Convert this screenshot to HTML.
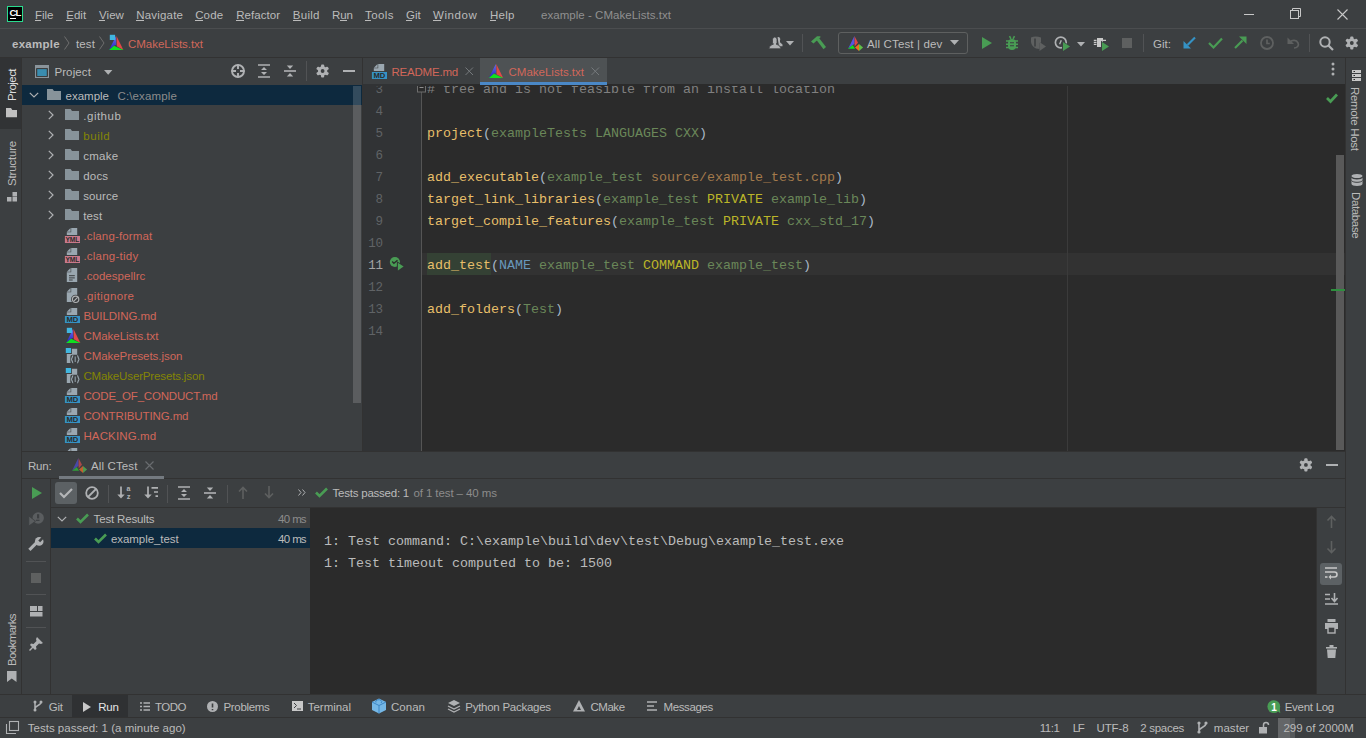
<!DOCTYPE html>
<html><head><meta charset="utf-8"><title>CLion</title>
<style>
html,body{margin:0;padding:0;}
body{width:1366px;height:738px;overflow:hidden;position:relative;background:#3C3F41;font-family:'Liberation Sans', sans-serif;}
svg{overflow:visible}
.m{-webkit-text-stroke:0.2px currentColor}
</style></head><body>
<div style="position:absolute;left:0px;top:28px;width:1366px;height:1px;background:#4B4D4F;"></div>
<div style="position:absolute;left:7px;top:6px;width:16px;height:16px;background:#000;box-sizing:border-box;border:1px solid #2ADB8F;"></div>
<div style="position:absolute;left:9.6px;top:7.96px;font-family:'Liberation Sans', sans-serif;font-size:9.5px;font-weight:700;line-height:1;white-space:pre;color:#FFFFFF;letter-spacing:-1.036px;">CL</div>
<div style="position:absolute;left:10px;top:18px;width:6px;height:1.3px;background:#FFFFFF;"></div>
<div style="position:absolute;left:35px;top:10.27px;font-family:'Liberation Sans', sans-serif;font-size:11.5px;font-weight:400;line-height:1;white-space:pre;color:#BBBBBB;letter-spacing:-0.008px;">File</div>
<div style="position:absolute;left:35px;top:20px;width:6px;height:1px;background:#BBBBBB;"></div>
<div style="position:absolute;left:66.2px;top:10.27px;font-family:'Liberation Sans', sans-serif;font-size:11.5px;font-weight:400;line-height:1;white-space:pre;color:#BBBBBB;letter-spacing:0.043px;">Edit</div>
<div style="position:absolute;left:66.2px;top:20px;width:6px;height:1px;background:#BBBBBB;"></div>
<div style="position:absolute;left:99px;top:10.27px;font-family:'Liberation Sans', sans-serif;font-size:11.5px;font-weight:400;line-height:1;white-space:pre;color:#BBBBBB;letter-spacing:0.070px;">View</div>
<div style="position:absolute;left:99px;top:20px;width:6px;height:1px;background:#BBBBBB;"></div>
<div style="position:absolute;left:136.2px;top:10.27px;font-family:'Liberation Sans', sans-serif;font-size:11.5px;font-weight:400;line-height:1;white-space:pre;color:#BBBBBB;letter-spacing:0.201px;">Navigate</div>
<div style="position:absolute;left:136.2px;top:20px;width:8px;height:1px;background:#BBBBBB;"></div>
<div style="position:absolute;left:195.2px;top:10.27px;font-family:'Liberation Sans', sans-serif;font-size:11.5px;font-weight:400;line-height:1;white-space:pre;color:#BBBBBB;letter-spacing:0.125px;">Code</div>
<div style="position:absolute;left:195.2px;top:20px;width:8px;height:1px;background:#BBBBBB;"></div>
<div style="position:absolute;left:236.2px;top:10.27px;font-family:'Liberation Sans', sans-serif;font-size:11.5px;font-weight:400;line-height:1;white-space:pre;color:#BBBBBB;letter-spacing:0.066px;">Refactor</div>
<div style="position:absolute;left:236.2px;top:20px;width:8px;height:1px;background:#BBBBBB;"></div>
<div style="position:absolute;left:292.8px;top:10.27px;font-family:'Liberation Sans', sans-serif;font-size:11.5px;font-weight:400;line-height:1;white-space:pre;color:#BBBBBB;letter-spacing:0.284px;">Build</div>
<div style="position:absolute;left:292.8px;top:20px;width:8px;height:1px;background:#BBBBBB;"></div>
<div style="position:absolute;left:332px;top:10.27px;font-family:'Liberation Sans', sans-serif;font-size:11.5px;font-weight:400;line-height:1;white-space:pre;color:#BBBBBB;letter-spacing:-0.103px;">Run</div>
<div style="position:absolute;left:340px;top:20px;width:7px;height:1px;background:#BBBBBB;"></div>
<div style="position:absolute;left:365px;top:10.27px;font-family:'Liberation Sans', sans-serif;font-size:11.5px;font-weight:400;line-height:1;white-space:pre;color:#BBBBBB;letter-spacing:0.428px;">Tools</div>
<div style="position:absolute;left:365px;top:20px;width:6px;height:1px;background:#BBBBBB;"></div>
<div style="position:absolute;left:406px;top:10.27px;font-family:'Liberation Sans', sans-serif;font-size:11.5px;font-weight:400;line-height:1;white-space:pre;color:#BBBBBB;letter-spacing:-0.001px;">Git</div>
<div style="position:absolute;left:406px;top:20px;width:6px;height:1px;background:#BBBBBB;"></div>
<div style="position:absolute;left:433px;top:10.27px;font-family:'Liberation Sans', sans-serif;font-size:11.5px;font-weight:400;line-height:1;white-space:pre;color:#BBBBBB;letter-spacing:0.566px;">Window</div>
<div style="position:absolute;left:433px;top:20px;width:8px;height:1px;background:#BBBBBB;"></div>
<div style="position:absolute;left:490px;top:10.27px;font-family:'Liberation Sans', sans-serif;font-size:11.5px;font-weight:400;line-height:1;white-space:pre;color:#BBBBBB;letter-spacing:0.236px;">Help</div>
<div style="position:absolute;left:490px;top:20px;width:6px;height:1px;background:#BBBBBB;"></div>
<div style="position:absolute;left:541px;top:10.27px;font-family:'Liberation Sans', sans-serif;font-size:11.5px;font-weight:400;line-height:1;white-space:pre;color:#909090;letter-spacing:0.037px;">example - CMakeLists.txt</div>
<div style="position:absolute;left:1244px;top:14px;width:10px;height:1px;background:#C8C8C8;"></div>
<svg style="position:absolute;left:1290px;top:8px;" width="12" height="12" viewBox="0 0 12 12"><rect x="0.5" y="2.5" width="8" height="8" fill="none" stroke="#C8C8C8" stroke-width="1"/><path d="M2.5 2.5V0.5H10.5V8.5H8.5" fill="none" stroke="#C8C8C8" stroke-width="1"/></svg>
<svg style="position:absolute;left:1337px;top:9px;" width="11" height="11" viewBox="0 0 11 11"><path d="M0.5 0.5L10.5 10.5M10.5 0.5L0.5 10.5" stroke="#C8C8C8" stroke-width="1.1"/></svg>
<div style="position:absolute;left:0px;top:57px;width:1366px;height:1px;background:#323232;"></div>
<div style="position:absolute;left:12px;top:39.27px;font-family:'Liberation Sans', sans-serif;font-size:11.5px;font-weight:700;line-height:1;white-space:pre;color:#BBBBBB;letter-spacing:0.281px;">example</div>
<svg style="position:absolute;left:64px;top:36px;" width="6" height="14" viewBox="0 0 6 14"><path d="M0.5 0.5L5 7L0.5 13.5" fill="none" stroke="#6E6E6E" stroke-width="1"/></svg>
<div style="position:absolute;left:76px;top:39.27px;font-family:'Liberation Sans', sans-serif;font-size:11.5px;font-weight:400;line-height:1;white-space:pre;color:#BBBBBB;letter-spacing:0.113px;">test</div>
<svg style="position:absolute;left:99px;top:36px;" width="6" height="14" viewBox="0 0 6 14"><path d="M0.5 0.5L5 7L0.5 13.5" fill="none" stroke="#6E6E6E" stroke-width="1"/></svg>
<svg style="position:absolute;left:108px;top:34px;" width="16" height="16" viewBox="0 0 16 16"><defs><linearGradient id="cmb" x1="0" y1="0" x2="0" y2="1"><stop offset="0" stop-color="#7070E8"/><stop offset="1" stop-color="#2020C0"/></linearGradient></defs><g transform="translate(0.2,1)"><path d="M7.8 0.9L0.8 14.9L5.8 10.7L8.1 9.8Z" fill="url(#cmb)"/><path d="M8.3 0.9L15.2 14.9L8.6 11.2Z" fill="#E04848"/><path d="M0.8 14.9L5.8 10.7L15.2 14.9Z" fill="#10E020"/></g><rect x="1.8" y="0.8" width="5.3" height="5.2" fill="#40B6E0"/></svg>
<div style="position:absolute;left:128px;top:39.27px;font-family:'Liberation Sans', sans-serif;font-size:11.5px;font-weight:400;line-height:1;white-space:pre;color:#D1675A;letter-spacing:-0.030px;">CMakeLists.txt</div>
<svg style="position:absolute;left:768px;top:36px;" width="16" height="14" viewBox="0 0 16 14"><path d="M9.5 1.2A2 2.3 0 0 1 12 4.5V6.3L14.5 8.5V10.3H11Z" fill="#AFB1B3"/><path d="M6.7 1A2.3 2.6 0 0 1 9 3.6V6.5Q9 7.5 8 8Q12.5 9 13 12.8H0.8Q1.2 9 5.5 8Q4.5 7.5 4.5 6.5V3.6A2.3 2.6 0 0 1 6.7 1Z" fill="#AFB1B3" stroke="#3C3F41" stroke-width="0.8"/></svg>
<svg style="position:absolute;left:786px;top:41px;" width="8" height="5" viewBox="0 0 8 5"><path d="M0 0H8L4 4.5Z" fill="#AFB1B3"/></svg>
<div style="position:absolute;left:802px;top:34px;width:1px;height:18px;background:#515355;"></div>
<svg style="position:absolute;left:810px;top:35px;" width="17" height="16" viewBox="0 0 17 16"><path d="M1 6.5L7 1.3H10.3L10.5 2.3L3.5 8.5Z" fill="#499C54"/><path d="M6.5 5L9 3L16 12L13.5 14.3Z" fill="#499C54"/></svg>
<div style="position:absolute;left:838px;top:32px;width:130px;height:22px;background:transparent;box-sizing:border-box;border:1px solid #5E6060;border-radius:3px;"></div>
<svg style="position:absolute;left:848px;top:36px;" width="16" height="16" viewBox="0 0 16 16"><path d="M6.4 0L0.1 12.8L4.7 9L6.6 8Z" fill="#5555E0"/><path d="M6.6 0.3L10 6.7L6.6 10.5Z" fill="#E04545"/><path d="M0.1 12.8L4.7 9L7.1 12.8Z" fill="#10E020"/><path d="M7 11.4L11 8V14.9Z" fill="#F07020"/><path d="M11 8L15.1 11.4L11 14.9Z" fill="#60C048"/></svg>
<div style="position:absolute;left:867px;top:39.27px;font-family:'Liberation Sans', sans-serif;font-size:11.5px;font-weight:400;line-height:1;white-space:pre;color:#BBBBBB;letter-spacing:0.147px;">All CTest | dev</div>
<svg style="position:absolute;left:950px;top:40px;" width="9" height="5" viewBox="0 0 9 5"><path d="M0 0H9L4.5 5Z" fill="#AFB1B3"/></svg>
<svg style="position:absolute;left:982px;top:37px;" width="10" height="12" viewBox="0 0 10 12"><path d="M0 0L10 6L0 12Z" fill="#499C54"/></svg>
<svg style="position:absolute;left:1005px;top:35px;" width="14" height="16" viewBox="0 0 14 16"><path d="M3 8A4 4 0 0 1 11 8V11A4 4 0 0 1 3 11Z" fill="#499C54"/><path d="M4.5 1.2L6 3.8M9.5 1.2L8 3.8" stroke="#499C54" stroke-width="1.6"/><path d="M1 6H13M1 9.3H13M1 12.6H13" stroke="#499C54" stroke-width="1.5"/><path d="M5 7.7H9M5 10.8H9" stroke="#3C3F41" stroke-width="1.1"/></svg>
<svg style="position:absolute;left:1030px;top:36px;" width="17" height="16" viewBox="0 0 17 16"><path d="M1 1.5Q5.5 -0.5 11 1.5V6.5L9.5 7V13L6 12.5Q1.5 10 1 6Z" fill="#5E6060"/><path d="M5 2.5V10.5" stroke="#3C3F41" stroke-width="1.6"/><path d="M9.5 6L16 10.5L9.5 15Z" fill="#5E6060"/></svg>
<svg style="position:absolute;left:1054px;top:36px;" width="17" height="16" viewBox="0 0 17 16"><circle cx="6.8" cy="6.5" r="5.4" fill="none" stroke="#AFB1B3" stroke-width="1.7"/><path d="M7.3 4.3L5.6 8.3" stroke="#AFB1B3" stroke-width="1.4"/><path d="M8 4.8L17.5 10.5L8 16.5Z" fill="#3C3F41"/><path d="M9 6L16 10.5L9 15Z" fill="#499C54"/></svg>
<svg style="position:absolute;left:1077px;top:42px;" width="8" height="5" viewBox="0 0 8 5"><path d="M0 0H8L4 4.5Z" fill="#AFB1B3"/></svg>
<svg style="position:absolute;left:1093px;top:36px;" width="17" height="16" viewBox="0 0 17 16"><rect x="4" y="2" width="6" height="9" fill="#C8C8C8"/><path d="M0.8 4.4H3.5M0.8 6.4H3.5M0.8 8.4H3.5M10 4.4H13" stroke="#C8C8C8" stroke-width="1.1"/><path d="M8 4.8L17.5 10.5L8 16.5Z" fill="#3C3F41"/><path d="M9 6L16 10.5L9 15Z" fill="#499C54"/></svg>
<div style="position:absolute;left:1122px;top:38px;width:10px;height:10px;background:#5E6060;"></div>
<div style="position:absolute;left:1143px;top:34px;width:1px;height:18px;background:#515355;"></div>
<div style="position:absolute;left:1153px;top:39.27px;font-family:'Liberation Sans', sans-serif;font-size:11.5px;font-weight:400;line-height:1;white-space:pre;color:#BBBBBB;letter-spacing:0.027px;">Git:</div>
<svg style="position:absolute;left:1183px;top:36px;" width="13" height="13" viewBox="0 0 13 13"><path d="M12 1.5L4.5 9" stroke="#3592C4" stroke-width="2.2"/><path d="M0.5 12.5V5L8 12.5Z" fill="#3592C4"/></svg>
<svg style="position:absolute;left:1208px;top:37px;" width="15" height="12" viewBox="0 0 15 12"><path d="M1 6L5.5 10.5L14 1.5" fill="none" stroke="#499C54" stroke-width="2.2"/></svg>
<svg style="position:absolute;left:1234px;top:36px;" width="13" height="13" viewBox="0 0 13 13"><path d="M1 12L8.5 4.5" stroke="#499C54" stroke-width="2.2"/><path d="M12.5 0.5V8L5 0.5Z" fill="#499C54"/></svg>
<svg style="position:absolute;left:1260px;top:36px;" width="14" height="14" viewBox="0 0 14 14"><circle cx="7" cy="7" r="6" fill="none" stroke="#5E6060" stroke-width="1.8"/><path d="M7 3.5V7.5H9.8" fill="none" stroke="#5E6060" stroke-width="1.7"/></svg>
<svg style="position:absolute;left:1287px;top:36px;" width="14" height="14" viewBox="0 0 14 14"><path d="M0.5 1.5V8H7Z" fill="#5E6060"/><path d="M3 6C5 3.8 9.5 3.8 11 6.8S10 12 7 12" fill="none" stroke="#5E6060" stroke-width="1.7"/></svg>
<div style="position:absolute;left:1309px;top:34px;width:1px;height:18px;background:#515355;"></div>
<svg style="position:absolute;left:1319px;top:36px;" width="15" height="15" viewBox="0 0 15 15"><circle cx="6" cy="6" r="4.7" fill="none" stroke="#AFB1B3" stroke-width="2"/><path d="M9.5 9.5L14 14" stroke="#AFB1B3" stroke-width="2.2"/></svg>
<svg style="position:absolute;left:1345px;top:36px;" width="14" height="14" viewBox="0 0 14 14"><g transform="translate(6.8,7)"><circle r="4.7" fill="#AFB1B3"/><rect x="-1.6" y="-6.6" width="3.2" height="13.2" rx="1" fill="#AFB1B3"/><rect x="-1.6" y="-6.6" width="3.2" height="13.2" rx="1" fill="#AFB1B3" transform="rotate(60)"/><rect x="-1.6" y="-6.6" width="3.2" height="13.2" rx="1" fill="#AFB1B3" transform="rotate(120)"/><circle r="1.9" fill="#3C3F41"/></g></svg>
<div style="position:absolute;left:21px;top:58px;width:1px;height:636px;background:#323232;"></div>
<div style="position:absolute;left:0px;top:58px;width:21px;height:71px;background:#313335;"></div>
<div style="position:absolute;left:6.57px;top:101.00px;font-family:'Liberation Sans', sans-serif;font-size:11.5px;font-weight:400;line-height:1;white-space:pre;color:#DDDDDD;letter-spacing:-0.542px;transform-origin:0 0;transform:rotate(-90deg);">Project</div>
<div style="position:absolute;left:6.57px;top:186.00px;font-family:'Liberation Sans', sans-serif;font-size:11.5px;font-weight:400;line-height:1;white-space:pre;color:#BBBBBB;letter-spacing:-0.186px;transform-origin:0 0;transform:rotate(-90deg);">Structure</div>
<svg style="position:absolute;left:7px;top:192px;" width="10" height="10" viewBox="0 0 10 10"><rect x="0" y="5" width="4.5" height="4.5" fill="#AFB1B3"/><rect x="5.5" y="5" width="4.5" height="4.5" fill="#AFB1B3"/><rect x="5.5" y="0" width="4.5" height="4.5" fill="#AFB1B3"/></svg>
<svg style="position:absolute;left:6px;top:108px;" width="12" height="10" viewBox="0 0 12 10"><path d="M0 0H5L6.3 2H11V9.3H0Z" fill="#C0C0C0"/></svg>
<div style="position:absolute;left:6.57px;top:666.00px;font-family:'Liberation Sans', sans-serif;font-size:11.5px;font-weight:400;line-height:1;white-space:pre;color:#BBBBBB;letter-spacing:-0.615px;transform-origin:0 0;transform:rotate(-90deg);">Bookmarks</div>
<svg style="position:absolute;left:7px;top:671px;" width="10" height="11" viewBox="0 0 10 11"><path d="M0 0H9.5V11L4.75 7.5L0 11Z" fill="#AFB1B3"/></svg>
<div style="position:absolute;left:362px;top:58px;width:1px;height:393px;background:#323232;"></div>
<svg style="position:absolute;left:35px;top:65px;" width="14" height="13" viewBox="0 0 14 13"><rect x="0" y="0" width="14" height="13" fill="#8A949B"/><rect x="1.2" y="3.2" width="11.6" height="8.6" fill="#2B2B2B"/><rect x="2.2" y="4.1" width="9.6" height="6.9" fill="#3A8DB0"/></svg>
<div style="position:absolute;left:54.4px;top:67.27px;font-family:'Liberation Sans', sans-serif;font-size:11.5px;font-weight:400;line-height:1;white-space:pre;color:#BBBBBB;letter-spacing:0.115px;">Project</div>
<svg style="position:absolute;left:104px;top:70px;" width="9" height="5" viewBox="0 0 9 5"><path d="M0 0H8.4L4.2 4.8Z" fill="#AFB1B3"/></svg>
<svg style="position:absolute;left:231px;top:64px;" width="14" height="14" viewBox="0 0 14 14"><circle cx="7" cy="7" r="6" fill="none" stroke="#AFB1B3" stroke-width="1.9"/><path d="M7 0.5V5M7 9V13.5M0.5 7H5M9 7H13.5" stroke="#AFB1B3" stroke-width="1.9"/></svg>
<svg style="position:absolute;left:258px;top:64px;" width="12" height="14" viewBox="0 0 12 14"><path d="M0 1H12M0 13H12" stroke="#AFB1B3" stroke-width="1.6"/><path d="M6 3L9 6H3Z M6 11L9 8H3Z" fill="#AFB1B3"/></svg>
<svg style="position:absolute;left:284px;top:64px;" width="12" height="14" viewBox="0 0 12 14"><path d="M0 7H12" stroke="#AFB1B3" stroke-width="1.6"/><path d="M6 5L9.2 1.5H2.8Z M6 9L9.2 12.5H2.8Z" fill="#AFB1B3"/></svg>
<div style="position:absolute;left:306px;top:61px;width:1px;height:20px;background:#515355;"></div>
<svg style="position:absolute;left:316px;top:64px;" width="14" height="14" viewBox="0 0 14 14"><g transform="translate(6.6,7)"><circle r="4.7" fill="#AFB1B3"/><rect x="-1.6" y="-6.6" width="3.2" height="13.2" rx="1" fill="#AFB1B3"/><rect x="-1.6" y="-6.6" width="3.2" height="13.2" rx="1" fill="#AFB1B3" transform="rotate(60)"/><rect x="-1.6" y="-6.6" width="3.2" height="13.2" rx="1" fill="#AFB1B3" transform="rotate(120)"/><circle r="1.9" fill="#3C3F41"/></g></svg>
<div style="position:absolute;left:343px;top:70px;width:12px;height:2px;background:#AFB1B3;"></div>
<div style="position:absolute;left:22px;top:85px;width:340px;height:20px;background:#0D293E;"></div>
<svg style="position:absolute;left:29px;top:92px;" width="10" height="6" viewBox="0 0 10 6"><path d="M0.8 0.8L5 5L9.2 0.8" fill="none" stroke="#AFB1B3" stroke-width="1.2"/></svg>
<svg style="position:absolute;left:47px;top:89px;" width="14" height="11" viewBox="0 0 14 11"><path d="M0 0H5.6L7 2H14V11H0Z" fill="#87939A"/></svg>
<div style="position:absolute;left:65.5px;top:91.27px;font-family:'Liberation Sans', sans-serif;font-size:11.5px;font-weight:400;line-height:1;white-space:pre;color:#BBBBBB;letter-spacing:0.004px;">example</div>
<div style="position:absolute;left:117.5px;top:91.27px;font-family:'Liberation Sans', sans-serif;font-size:11.5px;font-weight:400;line-height:1;white-space:pre;color:#8C8C8C;letter-spacing:0.133px;">C:\example</div>
<svg style="position:absolute;left:48px;top:110px;" width="6" height="10" viewBox="0 0 6 10"><path d="M0.8 0.8L5 5L0.8 9.2" fill="none" stroke="#AFB1B3" stroke-width="1.2"/></svg>
<svg style="position:absolute;left:65px;top:109px;" width="14" height="11" viewBox="0 0 14 11"><path d="M0 0H5.6L7 2H14V11H0Z" fill="#87939A"/></svg>
<div style="position:absolute;left:83.3px;top:111.27px;font-family:'Liberation Sans', sans-serif;font-size:11.5px;font-weight:400;line-height:1;white-space:pre;color:#BBBBBB;letter-spacing:0.496px;">.github</div>
<svg style="position:absolute;left:48px;top:130px;" width="6" height="10" viewBox="0 0 6 10"><path d="M0.8 0.8L5 5L0.8 9.2" fill="none" stroke="#AFB1B3" stroke-width="1.2"/></svg>
<svg style="position:absolute;left:65px;top:129px;" width="14" height="11" viewBox="0 0 14 11"><path d="M0 0H5.6L7 2H14V11H0Z" fill="#87939A"/></svg>
<div style="position:absolute;left:83.3px;top:131.27px;font-family:'Liberation Sans', sans-serif;font-size:11.5px;font-weight:400;line-height:1;white-space:pre;color:#848504;letter-spacing:0.537px;">build</div>
<svg style="position:absolute;left:48px;top:150px;" width="6" height="10" viewBox="0 0 6 10"><path d="M0.8 0.8L5 5L0.8 9.2" fill="none" stroke="#AFB1B3" stroke-width="1.2"/></svg>
<svg style="position:absolute;left:65px;top:149px;" width="14" height="11" viewBox="0 0 14 11"><path d="M0 0H5.6L7 2H14V11H0Z" fill="#87939A"/></svg>
<div style="position:absolute;left:83.3px;top:151.27px;font-family:'Liberation Sans', sans-serif;font-size:11.5px;font-weight:400;line-height:1;white-space:pre;color:#BBBBBB;letter-spacing:0.225px;">cmake</div>
<svg style="position:absolute;left:48px;top:170px;" width="6" height="10" viewBox="0 0 6 10"><path d="M0.8 0.8L5 5L0.8 9.2" fill="none" stroke="#AFB1B3" stroke-width="1.2"/></svg>
<svg style="position:absolute;left:65px;top:169px;" width="14" height="11" viewBox="0 0 14 11"><path d="M0 0H5.6L7 2H14V11H0Z" fill="#87939A"/></svg>
<div style="position:absolute;left:83.3px;top:171.27px;font-family:'Liberation Sans', sans-serif;font-size:11.5px;font-weight:400;line-height:1;white-space:pre;color:#BBBBBB;letter-spacing:0.176px;">docs</div>
<svg style="position:absolute;left:48px;top:190px;" width="6" height="10" viewBox="0 0 6 10"><path d="M0.8 0.8L5 5L0.8 9.2" fill="none" stroke="#AFB1B3" stroke-width="1.2"/></svg>
<svg style="position:absolute;left:65px;top:189px;" width="14" height="11" viewBox="0 0 14 11"><path d="M0 0H5.6L7 2H14V11H0Z" fill="#87939A"/></svg>
<div style="position:absolute;left:83.3px;top:191.27px;font-family:'Liberation Sans', sans-serif;font-size:11.5px;font-weight:400;line-height:1;white-space:pre;color:#BBBBBB;letter-spacing:0.078px;">source</div>
<svg style="position:absolute;left:48px;top:210px;" width="6" height="10" viewBox="0 0 6 10"><path d="M0.8 0.8L5 5L0.8 9.2" fill="none" stroke="#AFB1B3" stroke-width="1.2"/></svg>
<svg style="position:absolute;left:65px;top:209px;" width="14" height="11" viewBox="0 0 14 11"><path d="M0 0H5.6L7 2H14V11H0Z" fill="#87939A"/></svg>
<div style="position:absolute;left:83.3px;top:211.27px;font-family:'Liberation Sans', sans-serif;font-size:11.5px;font-weight:400;line-height:1;white-space:pre;color:#BBBBBB;letter-spacing:0.113px;">test</div>
<svg style="position:absolute;left:64px;top:227px;" width="16" height="16" viewBox="0 0 16 16"><path d="M7.2 1.1H13.2V8.0H2.8V5.3H7.2Z" fill="#9AA7B0"/><path d="M2.8 4.7L6.6 1.1V4.7Z" fill="#9AA7B0"/><rect x="0.9" y="9" width="15.1" height="7" fill="#C9788A"/><text x="8.4" y="15.3" font-family="Liberation Sans" font-size="7.4" font-weight="700" fill="#2B2B2B" text-anchor="middle" textLength="14" lengthAdjust="spacingAndGlyphs">YML</text></svg>
<div style="position:absolute;left:83.4px;top:231.27px;font-family:'Liberation Sans', sans-serif;font-size:11.5px;font-weight:400;line-height:1;white-space:pre;color:#D1675A;letter-spacing:0.145px;">.clang-format</div>
<svg style="position:absolute;left:64px;top:247px;" width="16" height="16" viewBox="0 0 16 16"><path d="M7.2 1.1H13.2V8.0H2.8V5.3H7.2Z" fill="#9AA7B0"/><path d="M2.8 4.7L6.6 1.1V4.7Z" fill="#9AA7B0"/><rect x="0.9" y="9" width="15.1" height="7" fill="#C9788A"/><text x="8.4" y="15.3" font-family="Liberation Sans" font-size="7.4" font-weight="700" fill="#2B2B2B" text-anchor="middle" textLength="14" lengthAdjust="spacingAndGlyphs">YML</text></svg>
<div style="position:absolute;left:83.4px;top:251.27px;font-family:'Liberation Sans', sans-serif;font-size:11.5px;font-weight:400;line-height:1;white-space:pre;color:#D1675A;letter-spacing:0.234px;">.clang-tidy</div>
<svg style="position:absolute;left:64px;top:267px;" width="16" height="16" viewBox="0 0 16 16"><path d="M7.2 1.1H13.2V14.9H2.8V5.3H7.2Z" fill="#9AA7B0"/><path d="M2.8 4.7L6.6 1.1V4.7Z" fill="#9AA7B0"/><path d="M5 8.7H10.8M5 10.9H10.8M5 13H8.7" stroke="#3C3F41" stroke-width="1"/></svg>
<div style="position:absolute;left:83.4px;top:271.27px;font-family:'Liberation Sans', sans-serif;font-size:11.5px;font-weight:400;line-height:1;white-space:pre;color:#D1675A;letter-spacing:0.052px;">.codespellrc</div>
<svg style="position:absolute;left:64px;top:287px;" width="16" height="16" viewBox="0 0 16 16"><path d="M7.2 1.1H13.2V14.9H2.8V5.3H7.2Z" fill="#9AA7B0"/><path d="M2.8 4.7L6.6 1.1V4.7Z" fill="#9AA7B0"/><circle cx="11.6" cy="12.3" r="4.6" fill="#3C3F41"/><circle cx="11.6" cy="12.3" r="3.2" fill="none" stroke="#AFB1B3" stroke-width="1.2"/><path d="M9.6 14.3L13.6 10.3" stroke="#AFB1B3" stroke-width="1.2"/></svg>
<div style="position:absolute;left:83.4px;top:291.27px;font-family:'Liberation Sans', sans-serif;font-size:11.5px;font-weight:400;line-height:1;white-space:pre;color:#D1675A;letter-spacing:0.369px;">.gitignore</div>
<svg style="position:absolute;left:64px;top:307px;" width="16" height="16" viewBox="0 0 16 16"><path d="M7.2 1.1H13.2V8.0H2.8V5.3H7.2Z" fill="#9AA7B0"/><path d="M2.8 4.7L6.6 1.1V4.7Z" fill="#9AA7B0"/><rect x="0.9" y="9" width="15.1" height="7" fill="#3592C4"/><text x="8.4" y="15.3" font-family="Liberation Sans" font-size="7.6" font-weight="700" fill="#2B2B2B" text-anchor="middle" >MD</text></svg>
<div style="position:absolute;left:83.4px;top:311.27px;font-family:'Liberation Sans', sans-serif;font-size:11.5px;font-weight:400;line-height:1;white-space:pre;color:#D1675A;letter-spacing:-0.045px;">BUILDING.md</div>
<svg style="position:absolute;left:65px;top:327px;" width="16" height="16" viewBox="0 0 16 16"><defs><linearGradient id="cmb" x1="0" y1="0" x2="0" y2="1"><stop offset="0" stop-color="#7070E8"/><stop offset="1" stop-color="#2020C0"/></linearGradient></defs><g transform="translate(0.2,1)"><path d="M7.8 0.9L0.8 14.9L5.8 10.7L8.1 9.8Z" fill="url(#cmb)"/><path d="M8.3 0.9L15.2 14.9L8.6 11.2Z" fill="#E04848"/><path d="M0.8 14.9L5.8 10.7L15.2 14.9Z" fill="#10E020"/></g><rect x="1.8" y="0.8" width="5.3" height="5.2" fill="#40B6E0"/></svg>
<div style="position:absolute;left:83.4px;top:331.27px;font-family:'Liberation Sans', sans-serif;font-size:11.5px;font-weight:400;line-height:1;white-space:pre;color:#D1675A;letter-spacing:-0.030px;">CMakeLists.txt</div>
<svg style="position:absolute;left:64px;top:347px;" width="16" height="16" viewBox="0 0 16 16"><path d="M7.9 1.8H13.2V16H2.8V7H7.9Z" fill="#9AA7B0"/><rect x="1.8" y="1" width="5.3" height="5" fill="#40B6E0"/><rect x="6.3" y="7.7" width="9.7" height="9.2" rx="2" fill="#3C3F41"/><path d="M9.2 8.6C8 8.6 8.6 12.2 7 12.3C8.6 12.4 8 16 9.2 16M13.2 8.6C14.4 8.6 13.8 12.2 15.4 12.3C13.8 12.4 14.4 16 13.2 16" fill="none" stroke="#9AA7B0" stroke-width="1.2"/><path d="M11.2 9.5V15" stroke="#9AA7B0" stroke-width="1"/></svg>
<div style="position:absolute;left:83.4px;top:351.27px;font-family:'Liberation Sans', sans-serif;font-size:11.5px;font-weight:400;line-height:1;white-space:pre;color:#D1675A;letter-spacing:-0.042px;">CMakePresets.json</div>
<svg style="position:absolute;left:64px;top:367px;" width="16" height="16" viewBox="0 0 16 16"><path d="M7.9 1.8H13.2V16H2.8V7H7.9Z" fill="#9AA7B0"/><rect x="1.8" y="1" width="5.3" height="5" fill="#40B6E0"/><rect x="6.3" y="7.7" width="9.7" height="9.2" rx="2" fill="#3C3F41"/><path d="M9.2 8.6C8 8.6 8.6 12.2 7 12.3C8.6 12.4 8 16 9.2 16M13.2 8.6C14.4 8.6 13.8 12.2 15.4 12.3C13.8 12.4 14.4 16 13.2 16" fill="none" stroke="#9AA7B0" stroke-width="1.2"/><path d="M11.2 9.5V15" stroke="#9AA7B0" stroke-width="1"/></svg>
<div style="position:absolute;left:83.4px;top:371.27px;font-family:'Liberation Sans', sans-serif;font-size:11.5px;font-weight:400;line-height:1;white-space:pre;color:#848504;letter-spacing:-0.142px;">CMakeUserPresets.json</div>
<svg style="position:absolute;left:64px;top:387px;" width="16" height="16" viewBox="0 0 16 16"><path d="M7.2 1.1H13.2V8.0H2.8V5.3H7.2Z" fill="#9AA7B0"/><path d="M2.8 4.7L6.6 1.1V4.7Z" fill="#9AA7B0"/><rect x="0.9" y="9" width="15.1" height="7" fill="#3592C4"/><text x="8.4" y="15.3" font-family="Liberation Sans" font-size="7.6" font-weight="700" fill="#2B2B2B" text-anchor="middle" >MD</text></svg>
<div style="position:absolute;left:83.4px;top:391.27px;font-family:'Liberation Sans', sans-serif;font-size:11.5px;font-weight:400;line-height:1;white-space:pre;color:#D1675A;letter-spacing:-0.188px;">CODE_OF_CONDUCT.md</div>
<svg style="position:absolute;left:64px;top:407px;" width="16" height="16" viewBox="0 0 16 16"><path d="M7.2 1.1H13.2V8.0H2.8V5.3H7.2Z" fill="#9AA7B0"/><path d="M2.8 4.7L6.6 1.1V4.7Z" fill="#9AA7B0"/><rect x="0.9" y="9" width="15.1" height="7" fill="#3592C4"/><text x="8.4" y="15.3" font-family="Liberation Sans" font-size="7.6" font-weight="700" fill="#2B2B2B" text-anchor="middle" >MD</text></svg>
<div style="position:absolute;left:83.4px;top:411.27px;font-family:'Liberation Sans', sans-serif;font-size:11.5px;font-weight:400;line-height:1;white-space:pre;color:#D1675A;letter-spacing:-0.114px;">CONTRIBUTING.md</div>
<svg style="position:absolute;left:64px;top:427px;" width="16" height="16" viewBox="0 0 16 16"><path d="M7.2 1.1H13.2V8.0H2.8V5.3H7.2Z" fill="#9AA7B0"/><path d="M2.8 4.7L6.6 1.1V4.7Z" fill="#9AA7B0"/><rect x="0.9" y="9" width="15.1" height="7" fill="#3592C4"/><text x="8.4" y="15.3" font-family="Liberation Sans" font-size="7.6" font-weight="700" fill="#2B2B2B" text-anchor="middle" >MD</text></svg>
<div style="position:absolute;left:83.4px;top:431.27px;font-family:'Liberation Sans', sans-serif;font-size:11.5px;font-weight:400;line-height:1;white-space:pre;color:#D1675A;letter-spacing:0.142px;">HACKING.md</div>
<svg style="position:absolute;left:64px;top:447px;" width="16" height="16" viewBox="0 0 16 16"><path d="M7.2 1.1H13.2V14.9H2.8V5.3H7.2Z" fill="#9AA7B0"/><path d="M2.8 4.7L6.6 1.1V4.7Z" fill="#9AA7B0"/></svg>
<div style="position:absolute;left:353px;top:86px;width:8px;height:317px;background:rgba(255,255,255,0.16);"></div>
<div style="position:absolute;left:22px;top:451px;width:1323px;height:1px;background:#323232;"></div>
<div style="position:absolute;left:363px;top:84px;width:982px;height:367px;background:#2B2B2B;"></div>
<div style="position:absolute;left:363px;top:84px;width:58px;height:367px;background:#313335;"></div>
<div style="position:absolute;left:422px;top:253px;width:923px;height:22px;background:#323232;"></div>
<div style="position:absolute;left:421px;top:84px;width:1px;height:367px;background:#555555;"></div>
<div style="position:absolute;left:1067px;top:84px;width:1px;height:367px;background:#3B3B3B;"></div>
<div style="position:absolute;left:1336px;top:155px;width:8px;height:295px;background:#595959;"></div>
<div style="position:absolute;left:1331px;top:289px;width:14px;height:2px;background:#2E8F3E;"></div>
<svg style="position:absolute;left:1326px;top:93px;" width="12" height="10" viewBox="0 0 12 10"><path d="M1 5L4.5 8.5L11 1.5" fill="none" stroke="#499C54" stroke-width="2.7"/></svg>
<div style="position:absolute;left:375.6px;top:84.12px;font-family:'Liberation Mono', monospace;font-size:12.5px;font-weight:400;line-height:1;white-space:pre;color:#606366;letter-spacing:-0.116px;">3</div>
<div style="position:absolute;left:375.6px;top:106.12px;font-family:'Liberation Mono', monospace;font-size:12.5px;font-weight:400;line-height:1;white-space:pre;color:#606366;letter-spacing:-0.116px;">4</div>
<div style="position:absolute;left:375.6px;top:128.12px;font-family:'Liberation Mono', monospace;font-size:12.5px;font-weight:400;line-height:1;white-space:pre;color:#606366;letter-spacing:-0.116px;">5</div>
<div style="position:absolute;left:375.6px;top:150.12px;font-family:'Liberation Mono', monospace;font-size:12.5px;font-weight:400;line-height:1;white-space:pre;color:#606366;letter-spacing:-0.116px;">6</div>
<div style="position:absolute;left:375.6px;top:172.12px;font-family:'Liberation Mono', monospace;font-size:12.5px;font-weight:400;line-height:1;white-space:pre;color:#606366;letter-spacing:-0.116px;">7</div>
<div style="position:absolute;left:375.6px;top:194.12px;font-family:'Liberation Mono', monospace;font-size:12.5px;font-weight:400;line-height:1;white-space:pre;color:#606366;letter-spacing:-0.116px;">8</div>
<div style="position:absolute;left:375.6px;top:216.12px;font-family:'Liberation Mono', monospace;font-size:12.5px;font-weight:400;line-height:1;white-space:pre;color:#606366;letter-spacing:-0.116px;">9</div>
<div style="position:absolute;left:368.2px;top:238.12px;font-family:'Liberation Mono', monospace;font-size:12.5px;font-weight:400;line-height:1;white-space:pre;color:#606366;letter-spacing:-0.108px;">10</div>
<div style="position:absolute;left:368.2px;top:260.12px;font-family:'Liberation Mono', monospace;font-size:12.5px;font-weight:400;line-height:1;white-space:pre;color:#A4A3A3;letter-spacing:-0.108px;">11</div>
<div style="position:absolute;left:368.2px;top:282.12px;font-family:'Liberation Mono', monospace;font-size:12.5px;font-weight:400;line-height:1;white-space:pre;color:#606366;letter-spacing:-0.108px;">12</div>
<div style="position:absolute;left:368.2px;top:304.12px;font-family:'Liberation Mono', monospace;font-size:12.5px;font-weight:400;line-height:1;white-space:pre;color:#606366;letter-spacing:-0.108px;">13</div>
<div style="position:absolute;left:368.2px;top:326.12px;font-family:'Liberation Mono', monospace;font-size:12.5px;font-weight:400;line-height:1;white-space:pre;color:#606366;letter-spacing:-0.108px;">14</div>
<div style="position:absolute;left:427px;top:82.78px;font-family:'Liberation Mono', monospace;font-size:13.333px;font-weight:400;line-height:1;white-space:pre;color:#808080;letter-spacing:0.002px;"># tree and is not feasible from an install location</div>
<div style="position:absolute;left:427px;top:126.78px;font-family:'Liberation Mono', monospace;font-size:13.333px;font-weight:400;line-height:1;white-space:pre;color:#E8BF6A;letter-spacing:0.000px;">project</div>
<div style="position:absolute;left:483px;top:126.78px;font-family:'Liberation Mono', monospace;font-size:13.333px;font-weight:400;line-height:1;white-space:pre;color:#A9B7C6;letter-spacing:0.000px;">(</div>
<div style="position:absolute;left:491px;top:126.78px;font-family:'Liberation Mono', monospace;font-size:13.333px;font-weight:400;line-height:1;white-space:pre;color:#6A8759;letter-spacing:0.002px;">exampleTests LANGUAGES CXX</div>
<div style="position:absolute;left:699px;top:126.78px;font-family:'Liberation Mono', monospace;font-size:13.333px;font-weight:400;line-height:1;white-space:pre;color:#A9B7C6;letter-spacing:0.000px;">)</div>
<div style="position:absolute;left:427px;top:170.78px;font-family:'Liberation Mono', monospace;font-size:13.333px;font-weight:400;line-height:1;white-space:pre;color:#E8BF6A;letter-spacing:0.001px;">add_executable</div>
<div style="position:absolute;left:539px;top:170.78px;font-family:'Liberation Mono', monospace;font-size:13.333px;font-weight:400;line-height:1;white-space:pre;color:#A9B7C6;letter-spacing:0.000px;">(</div>
<div style="position:absolute;left:547px;top:170.78px;font-family:'Liberation Mono', monospace;font-size:13.333px;font-weight:400;line-height:1;white-space:pre;color:#6A8759;letter-spacing:0.001px;">example_test </div>
<div style="position:absolute;left:651px;top:170.78px;font-family:'Liberation Mono', monospace;font-size:13.333px;font-weight:400;line-height:1;white-space:pre;color:#A47A4C;letter-spacing:0.001px;">source/example_test.cpp</div>
<div style="position:absolute;left:835px;top:170.78px;font-family:'Liberation Mono', monospace;font-size:13.333px;font-weight:400;line-height:1;white-space:pre;color:#A9B7C6;letter-spacing:0.000px;">)</div>
<div style="position:absolute;left:427px;top:192.78px;font-family:'Liberation Mono', monospace;font-size:13.333px;font-weight:400;line-height:1;white-space:pre;color:#E8BF6A;letter-spacing:0.001px;">target_link_libraries</div>
<div style="position:absolute;left:595px;top:192.78px;font-family:'Liberation Mono', monospace;font-size:13.333px;font-weight:400;line-height:1;white-space:pre;color:#A9B7C6;letter-spacing:0.000px;">(</div>
<div style="position:absolute;left:603px;top:192.78px;font-family:'Liberation Mono', monospace;font-size:13.333px;font-weight:400;line-height:1;white-space:pre;color:#6A8759;letter-spacing:0.001px;">example_test </div>
<div style="position:absolute;left:707px;top:192.78px;font-family:'Liberation Mono', monospace;font-size:13.333px;font-weight:400;line-height:1;white-space:pre;color:#BBB529;letter-spacing:0.000px;">PRIVATE </div>
<div style="position:absolute;left:771px;top:192.78px;font-family:'Liberation Mono', monospace;font-size:13.333px;font-weight:400;line-height:1;white-space:pre;color:#6A8759;letter-spacing:0.001px;">example_lib</div>
<div style="position:absolute;left:859px;top:192.78px;font-family:'Liberation Mono', monospace;font-size:13.333px;font-weight:400;line-height:1;white-space:pre;color:#A9B7C6;letter-spacing:0.000px;">)</div>
<div style="position:absolute;left:427px;top:214.78px;font-family:'Liberation Mono', monospace;font-size:13.333px;font-weight:400;line-height:1;white-space:pre;color:#E8BF6A;letter-spacing:0.001px;">target_compile_features</div>
<div style="position:absolute;left:611px;top:214.78px;font-family:'Liberation Mono', monospace;font-size:13.333px;font-weight:400;line-height:1;white-space:pre;color:#A9B7C6;letter-spacing:0.000px;">(</div>
<div style="position:absolute;left:619px;top:214.78px;font-family:'Liberation Mono', monospace;font-size:13.333px;font-weight:400;line-height:1;white-space:pre;color:#6A8759;letter-spacing:0.001px;">example_test </div>
<div style="position:absolute;left:723px;top:214.78px;font-family:'Liberation Mono', monospace;font-size:13.333px;font-weight:400;line-height:1;white-space:pre;color:#BBB529;letter-spacing:0.000px;">PRIVATE </div>
<div style="position:absolute;left:787px;top:214.78px;font-family:'Liberation Mono', monospace;font-size:13.333px;font-weight:400;line-height:1;white-space:pre;color:#6A8759;letter-spacing:0.002px;">cxx_std_17</div>
<div style="position:absolute;left:867px;top:214.78px;font-family:'Liberation Mono', monospace;font-size:13.333px;font-weight:400;line-height:1;white-space:pre;color:#A9B7C6;letter-spacing:0.000px;">)</div>
<div style="position:absolute;left:427px;top:253px;width:64px;height:22px;background:#344134;"></div>
<div style="position:absolute;left:427px;top:258.78px;font-family:'Liberation Mono', monospace;font-size:13.333px;font-weight:400;line-height:1;white-space:pre;color:#E8BF6A;letter-spacing:0.000px;">add_test</div>
<div style="position:absolute;left:491px;top:258.78px;font-family:'Liberation Mono', monospace;font-size:13.333px;font-weight:400;line-height:1;white-space:pre;color:#A9B7C6;letter-spacing:0.000px;">(</div>
<div style="position:absolute;left:499px;top:258.78px;font-family:'Liberation Mono', monospace;font-size:13.333px;font-weight:400;line-height:1;white-space:pre;color:#6897BB;letter-spacing:0.000px;">NAME </div>
<div style="position:absolute;left:539px;top:258.78px;font-family:'Liberation Mono', monospace;font-size:13.333px;font-weight:400;line-height:1;white-space:pre;color:#6A8759;letter-spacing:0.001px;">example_test </div>
<div style="position:absolute;left:643px;top:258.78px;font-family:'Liberation Mono', monospace;font-size:13.333px;font-weight:400;line-height:1;white-space:pre;color:#BBB529;letter-spacing:0.000px;">COMMAND </div>
<div style="position:absolute;left:707px;top:258.78px;font-family:'Liberation Mono', monospace;font-size:13.333px;font-weight:400;line-height:1;white-space:pre;color:#6A8759;letter-spacing:0.001px;">example_test</div>
<div style="position:absolute;left:803px;top:258.78px;font-family:'Liberation Mono', monospace;font-size:13.333px;font-weight:400;line-height:1;white-space:pre;color:#A9B7C6;letter-spacing:0.000px;">)</div>
<div style="position:absolute;left:427px;top:302.78px;font-family:'Liberation Mono', monospace;font-size:13.333px;font-weight:400;line-height:1;white-space:pre;color:#E8BF6A;letter-spacing:0.001px;">add_folders</div>
<div style="position:absolute;left:515px;top:302.78px;font-family:'Liberation Mono', monospace;font-size:13.333px;font-weight:400;line-height:1;white-space:pre;color:#A9B7C6;letter-spacing:0.000px;">(</div>
<div style="position:absolute;left:523px;top:302.78px;font-family:'Liberation Mono', monospace;font-size:13.333px;font-weight:400;line-height:1;white-space:pre;color:#6A8759;letter-spacing:0.000px;">Test</div>
<div style="position:absolute;left:555px;top:302.78px;font-family:'Liberation Mono', monospace;font-size:13.333px;font-weight:400;line-height:1;white-space:pre;color:#A9B7C6;letter-spacing:0.000px;">)</div>
<div style="position:absolute;left:363px;top:57px;width:982px;height:1px;background:#323232;"></div>
<svg style="position:absolute;left:417px;top:84px;" width="9" height="9" viewBox="0 0 9 9"><rect x="0.5" y="-1" width="8" height="9" fill="#2B2B2B" stroke="#6E6E6E" stroke-width="1"/><path d="M2.5 3.5H6.5" stroke="#8E8E8E"/></svg>
<svg style="position:absolute;left:389px;top:256px;" width="16" height="16" viewBox="0 0 16 16"><circle cx="5.9" cy="6" r="5.1" fill="#499C54"/><path d="M3.2 5.5L4.9 7.3L8.5 4.3" fill="none" stroke="#2B2B2B" stroke-width="1.3"/><path d="M7.9 5.2L16.3 10.5L7.9 16Z" fill="#313335"/><path d="M8.9 6.7L14.6 10.5L8.9 14.5Z" fill="#499C54"/></svg>
<div style="position:absolute;left:422px;top:84px;width:913px;height:1.8px;background:#2B2B2B;"></div>
<div style="position:absolute;left:363px;top:84px;width:58px;height:1.8px;background:#313335;"></div>
<div style="position:absolute;left:363px;top:58px;width:982px;height:26px;background:#3C3F41;"></div>
<div style="position:absolute;left:480px;top:58px;width:127px;height:26px;background:#4E5254;"></div>
<div style="position:absolute;left:480px;top:82px;width:127px;height:3px;background:#4A88C7;"></div>
<svg style="position:absolute;left:371px;top:63px;" width="16" height="16" viewBox="0 0 16 16"><path d="M7.2 1.1H13.2V8.0H2.8V5.3H7.2Z" fill="#9AA7B0"/><path d="M2.8 4.7L6.6 1.1V4.7Z" fill="#9AA7B0"/><rect x="0.9" y="9" width="15.1" height="7" fill="#3592C4"/><text x="8.4" y="15.3" font-family="Liberation Sans" font-size="7.6" font-weight="700" fill="#2B2B2B" text-anchor="middle" >MD</text></svg>
<div style="position:absolute;left:391.5px;top:67.27px;font-family:'Liberation Sans', sans-serif;font-size:11.5px;font-weight:400;line-height:1;white-space:pre;color:#D1675A;letter-spacing:-0.208px;">README.md</div>
<svg style="position:absolute;left:465px;top:67px;" width="9" height="9" viewBox="0 0 9 9"><path d="M0.5 0.5L8 8M8 0.5L0.5 8" stroke="#75797C" stroke-width="1"/></svg>
<svg style="position:absolute;left:488px;top:63px;" width="16" height="16" viewBox="0 0 16 16"><defs><linearGradient id="cmb" x1="0" y1="0" x2="0" y2="1"><stop offset="0" stop-color="#7070E8"/><stop offset="1" stop-color="#2020C0"/></linearGradient></defs><path d="M7.8 0.9L0.8 14.9L5.8 10.7L8.1 9.8Z" fill="url(#cmb)"/><path d="M8.3 0.9L15.2 14.9L8.6 11.2Z" fill="#E04848"/><path d="M0.8 14.9L5.8 10.7L15.2 14.9Z" fill="#10E020"/></svg>
<div style="position:absolute;left:508.5px;top:67.27px;font-family:'Liberation Sans', sans-serif;font-size:11.5px;font-weight:400;line-height:1;white-space:pre;color:#D1675A;letter-spacing:0.006px;">CMakeLists.txt</div>
<svg style="position:absolute;left:591px;top:67px;" width="9" height="9" viewBox="0 0 9 9"><path d="M0.5 0.5L8 8M8 0.5L0.5 8" stroke="#75797C" stroke-width="1"/></svg>
<svg style="position:absolute;left:1331px;top:62px;" width="4" height="14" viewBox="0 0 4 14"><circle cx="2" cy="2" r="1.5" fill="#AFB1B3"/><circle cx="2" cy="7" r="1.5" fill="#AFB1B3"/><circle cx="2" cy="12" r="1.5" fill="#AFB1B3"/></svg>
<div style="position:absolute;left:1345px;top:58px;width:1px;height:636px;background:#323232;"></div>
<svg style="position:absolute;left:1352px;top:70px;" width="9" height="11" viewBox="0 0 9 11"><rect x="0" y="0" width="9" height="3" fill="#C8C8C8"/><rect x="0" y="4" width="9" height="3" fill="#C8C8C8"/><rect x="0" y="8" width="9" height="3" fill="#C8C8C8"/><path d="M1.5 1.5H3M1.5 5.5H3M1.5 9.5H3" stroke="#2B2B2B" stroke-width="1"/></svg>
<div style="position:absolute;left:1360.23px;top:86.60px;font-family:'Liberation Sans', sans-serif;font-size:11.5px;font-weight:400;line-height:1;white-space:pre;color:#BBBBBB;letter-spacing:-0.328px;transform-origin:0 0;transform:rotate(90deg);">Remote Host</div>
<svg style="position:absolute;left:1351px;top:174px;" width="12" height="12" viewBox="0 0 12 12"><ellipse cx="6" cy="2" rx="5.5" ry="2" fill="#AFB1B3"/><path d="M0.5 3.5V10C0.5 11 3 12 6 12S11.5 11 11.5 10V3.5C11.5 4.5 9 5.5 6 5.5S0.5 4.5 0.5 3.5Z" fill="#AFB1B3"/><path d="M0.5 6.5C1 7.5 3 8.3 6 8.3S11 7.5 11.5 6.5" fill="none" stroke="#3C3F41"/></svg>
<div style="position:absolute;left:1360.93px;top:191.70px;font-family:'Liberation Sans', sans-serif;font-size:11.5px;font-weight:400;line-height:1;white-space:pre;color:#BBBBBB;letter-spacing:-0.367px;transform-origin:0 0;transform:rotate(90deg);">Database</div>
<div style="position:absolute;left:22px;top:452px;width:1323px;height:26px;background:#3C3F41;"></div>
<div style="position:absolute;left:22px;top:478px;width:1323px;height:1px;background:#323232;"></div>
<div style="position:absolute;left:28px;top:461.27px;font-family:'Liberation Sans', sans-serif;font-size:11.5px;font-weight:400;line-height:1;white-space:pre;color:#BBBBBB;letter-spacing:-0.199px;">Run:</div>
<svg style="position:absolute;left:72px;top:458px;" width="16" height="16" viewBox="0 0 16 16"><path d="M6.4 0L0.1 12.8L4.7 9L6.6 8Z" fill="#4848A8"/><path d="M6.6 0.3L10 6.7L6.6 10.5Z" fill="#A84848"/><path d="M0.1 12.8L4.7 9L7.1 12.8Z" fill="#30A038"/><path d="M7 11.4L11 8V14.9Z" fill="#C06030"/><path d="M11 8L15.1 11.4L11 14.9Z" fill="#509850"/></svg>
<div style="position:absolute;left:91px;top:461.27px;font-family:'Liberation Sans', sans-serif;font-size:11.5px;font-weight:400;line-height:1;white-space:pre;color:#BBBBBB;letter-spacing:0.125px;">All CTest</div>
<svg style="position:absolute;left:145px;top:461px;" width="9" height="9" viewBox="0 0 9 9"><path d="M0.5 0.5L8.5 8.5M8.5 0.5L0.5 8.5" stroke="#6A6D70" stroke-width="1.1"/></svg>
<div style="position:absolute;left:59px;top:476px;width:105px;height:3px;background:#747A80;"></div>
<svg style="position:absolute;left:1299px;top:458px;" width="14" height="14" viewBox="0 0 14 14"><g transform="translate(6.9,6.9)"><circle r="4.7" fill="#AFB1B3"/><rect x="-1.6" y="-6.6" width="3.2" height="13.2" rx="1" fill="#AFB1B3"/><rect x="-1.6" y="-6.6" width="3.2" height="13.2" rx="1" fill="#AFB1B3" transform="rotate(60)"/><rect x="-1.6" y="-6.6" width="3.2" height="13.2" rx="1" fill="#AFB1B3" transform="rotate(120)"/><circle r="1.9" fill="#3C3F41"/></g></svg>
<div style="position:absolute;left:1326px;top:464px;width:12px;height:2px;background:#AFB1B3;"></div>
<div style="position:absolute;left:51px;top:507px;width:1294px;height:1px;background:#323232;"></div>
<div style="position:absolute;left:50px;top:479px;width:1px;height:215px;background:#323232;"></div>
<svg style="position:absolute;left:32px;top:487px;" width="10" height="12" viewBox="0 0 10 12"><path d="M0 0L10 6L0 12Z" fill="#499C54"/></svg>
<svg style="position:absolute;left:28px;top:511px;" width="16" height="16" viewBox="0 0 16 16"><circle cx="10.2" cy="7" r="5.7" fill="#5A5D5F"/><path d="M0.8 5L7.5 10.2L0.8 15Z" fill="#5A5D5F" stroke="#3C3F41" stroke-width="0.8"/><rect x="9" y="3.2" width="2.2" height="4.2" fill="#3C3F41"/><path d="M8 9.3H11.5" stroke="#3C3F41" stroke-width="1.2"/></svg>
<svg style="position:absolute;left:28px;top:536px;" width="16" height="16" viewBox="0 0 16 16"><path d="M2.5 12.8L9.5 5.8" stroke="#AFB1B3" stroke-width="3.2" stroke-linecap="square"/><circle cx="11.2" cy="5.4" r="4.3" fill="#AFB1B3"/><rect x="-1.3" y="-7" width="2.6" height="7" transform="translate(11.2,5.4) rotate(45)" fill="#3C3F41"/></svg>
<div style="position:absolute;left:26px;top:561px;width:20px;height:1px;background:#515355;"></div>
<div style="position:absolute;left:31px;top:573px;width:10px;height:10px;background:#5E6060;"></div>
<div style="position:absolute;left:26px;top:594px;width:20px;height:1px;background:#515355;"></div>
<svg style="position:absolute;left:30px;top:606px;" width="13" height="11" viewBox="0 0 13 11"><rect x="0" y="0" width="7" height="5" fill="#AFB1B3"/><rect x="8" y="0" width="4.5" height="5" fill="#AFB1B3"/><rect x="0" y="6" width="12.5" height="4.5" fill="#AFB1B3"/></svg>
<div style="position:absolute;left:26px;top:627px;width:20px;height:1px;background:#515355;"></div>
<svg style="position:absolute;left:29px;top:637px;" width="14" height="14" viewBox="0 0 14 14"><path d="M8 0L14 6L12 7L10 6.5L7 9.5L7.5 12L6 13L1 8L2 6.5L4.5 7L7.5 4L7 2Z" fill="#AFB1B3"/><path d="M4 10L0.5 13.5" stroke="#AFB1B3" stroke-width="1.5"/></svg>
<div style="position:absolute;left:55px;top:482px;width:22px;height:22px;background:#5C6164;border-radius:3px;"></div>
<svg style="position:absolute;left:59px;top:487px;" width="14" height="12" viewBox="0 0 14 12"><path d="M1 6L5 10L13 2" fill="none" stroke="#B4B6B8" stroke-width="2.2"/></svg>
<svg style="position:absolute;left:85px;top:486px;" width="14" height="14" viewBox="0 0 14 14"><circle cx="7" cy="7" r="5.8" fill="none" stroke="#AFB1B3" stroke-width="1.8"/><path d="M3 11L11 3" stroke="#AFB1B3" stroke-width="1.8"/></svg>
<div style="position:absolute;left:108px;top:485px;width:1px;height:18px;background:#515355;"></div>
<svg style="position:absolute;left:117px;top:486px;" width="15" height="14" viewBox="0 0 15 14"><path d="M4 0.5V10" stroke="#AFB1B3" stroke-width="1.7"/><path d="M0.3 8.5H7.7L4 12.6Z" fill="#AFB1B3"/><text x="11.5" y="5.2" font-family="Liberation Sans" font-size="7" font-weight="700" fill="#AFB1B3" text-anchor="middle">a</text><text x="11.5" y="12.6" font-family="Liberation Sans" font-size="7.5" font-weight="700" fill="#AFB1B3" text-anchor="middle">z</text></svg>
<svg style="position:absolute;left:144px;top:486px;" width="15" height="14" viewBox="0 0 15 14"><path d="M4 0.5V10" stroke="#AFB1B3" stroke-width="1.7"/><path d="M0.3 8.5H7.7L4 12.6Z" fill="#AFB1B3"/><path d="M7.5 1.8H14M10 6H14M11.5 10.2H14" stroke="#AFB1B3" stroke-width="1.7"/></svg>
<div style="position:absolute;left:167px;top:485px;width:1px;height:18px;background:#515355;"></div>
<svg style="position:absolute;left:178px;top:486px;" width="12" height="14" viewBox="0 0 12 14"><path d="M0 1H12M0 13H12" stroke="#AFB1B3" stroke-width="1.6"/><path d="M6 3L9 6H3Z M6 11L9 8H3Z" fill="#AFB1B3"/></svg>
<svg style="position:absolute;left:204px;top:486px;" width="12" height="14" viewBox="0 0 12 14"><path d="M0 7H12" stroke="#AFB1B3" stroke-width="1.6"/><path d="M6 5L9.2 1.5H2.8Z M6 9L9.2 12.5H2.8Z" fill="#AFB1B3"/></svg>
<div style="position:absolute;left:227px;top:485px;width:1px;height:18px;background:#515355;"></div>
<svg style="position:absolute;left:238px;top:486px;" width="10" height="13" viewBox="0 0 10 13"><path d="M5 1.5V13M1 5.5L5 1.5L9 5.5" fill="none" stroke="#5E6060" stroke-width="1.6"/></svg>
<svg style="position:absolute;left:264px;top:486px;" width="10" height="13" viewBox="0 0 10 13"><path d="M5 0V11.5M1 7.5L5 11.5L9 7.5" fill="none" stroke="#5E6060" stroke-width="1.6"/></svg>
<svg style="position:absolute;left:298px;top:489px;" width="8" height="7" viewBox="0 0 8 7"><path d="M0.5 0.5L3 3.5L0.5 6.5M4.5 0.5L7 3.5L4.5 6.5" fill="none" stroke="#AFB1B3" stroke-width="1"/></svg>
<svg style="position:absolute;left:315px;top:487px;" width="13" height="11" viewBox="0 0 13 11"><path d="M1 5.5L4.5 9L12 1.5" fill="none" stroke="#499C54" stroke-width="2.6"/></svg>
<div style="position:absolute;left:332.6px;top:488.27px;font-family:'Liberation Sans', sans-serif;font-size:11.5px;font-weight:400;line-height:1;white-space:pre;color:#BBBBBB;letter-spacing:-0.234px;">Tests passed: 1</div>
<div style="position:absolute;left:413.5px;top:488.27px;font-family:'Liberation Sans', sans-serif;font-size:11.5px;font-weight:400;line-height:1;white-space:pre;color:#8C8C8C;letter-spacing:-0.101px;">of 1 test – 40 ms</div>
<div style="position:absolute;left:51px;top:528px;width:259px;height:20px;background:#0D293E;"></div>
<svg style="position:absolute;left:57px;top:516px;" width="10" height="6" viewBox="0 0 10 6"><path d="M0.8 0.8L5 5L9.2 0.8" fill="none" stroke="#AFB1B3" stroke-width="1.2"/></svg>
<svg style="position:absolute;left:76px;top:513px;" width="13" height="11" viewBox="0 0 13 11"><path d="M1 5.5L4.5 9L12 1.5" fill="none" stroke="#499C54" stroke-width="2.6"/></svg>
<div style="position:absolute;left:93.6px;top:514.27px;font-family:'Liberation Sans', sans-serif;font-size:11.5px;font-weight:400;line-height:1;white-space:pre;color:#BBBBBB;letter-spacing:-0.153px;">Test Results</div>
<div style="position:absolute;left:278px;top:514.27px;font-family:'Liberation Sans', sans-serif;font-size:11.5px;font-weight:400;line-height:1;white-space:pre;color:#8C8C8C;letter-spacing:-0.548px;">40</div>
<div style="position:absolute;left:292.3px;top:514.27px;font-family:'Liberation Sans', sans-serif;font-size:11.5px;font-weight:400;line-height:1;white-space:pre;color:#8C8C8C;letter-spacing:-1.072px;">ms</div>
<svg style="position:absolute;left:94px;top:533px;" width="13" height="11" viewBox="0 0 13 11"><path d="M1 5.5L4.5 9L12 1.5" fill="none" stroke="#499C54" stroke-width="2.6"/></svg>
<div style="position:absolute;left:111px;top:534.27px;font-family:'Liberation Sans', sans-serif;font-size:11.5px;font-weight:400;line-height:1;white-space:pre;color:#BBBBBB;letter-spacing:-0.067px;">example_test</div>
<div style="position:absolute;left:278px;top:534.27px;font-family:'Liberation Sans', sans-serif;font-size:11.5px;font-weight:400;line-height:1;white-space:pre;color:#BBBBBB;letter-spacing:-0.548px;">40</div>
<div style="position:absolute;left:292.3px;top:534.27px;font-family:'Liberation Sans', sans-serif;font-size:11.5px;font-weight:400;line-height:1;white-space:pre;color:#BBBBBB;letter-spacing:-1.072px;">ms</div>
<div style="position:absolute;left:310px;top:508px;width:1007px;height:186px;background:#2B2B2B;"></div>
<div style="position:absolute;left:324px;top:534.78px;font-family:'Liberation Mono', monospace;font-size:13.333px;font-weight:400;line-height:1;white-space:pre;color:#BBBBBB;letter-spacing:0.002px;">1: Test command: C:\example\build\dev\test\Debug\example_test.exe</div>
<div style="position:absolute;left:324px;top:556.78px;font-family:'Liberation Mono', monospace;font-size:13.333px;font-weight:400;line-height:1;white-space:pre;color:#BBBBBB;letter-spacing:0.002px;">1: Test timeout computed to be: 1500</div>
<svg style="position:absolute;left:1326px;top:515px;" width="11" height="13" viewBox="0 0 11 13"><path d="M5.5 1.5V13M1.5 5.5L5.5 1.5L9.5 5.5" fill="none" stroke="#5E6060" stroke-width="1.6"/></svg>
<svg style="position:absolute;left:1326px;top:541px;" width="11" height="13" viewBox="0 0 11 13"><path d="M5.5 0V11.5M1.5 7.5L5.5 11.5L9.5 7.5" fill="none" stroke="#5E6060" stroke-width="1.6"/></svg>
<div style="position:absolute;left:1320px;top:563px;width:22px;height:22px;background:#5C6164;border-radius:3px;"></div>
<svg style="position:absolute;left:1325px;top:567px;" width="13" height="13" viewBox="0 0 13 13"><path d="M0 1H12M0 5H9.5A2.5 2.5 0 0 1 9.5 10H5" fill="none" stroke="#C8C8C8" stroke-width="1.6"/><path d="M6 7.5L3.5 10L6 12.5Z" fill="#C8C8C8"/><path d="M0 10H2.5" stroke="#C8C8C8" stroke-width="1.6"/></svg>
<svg style="position:absolute;left:1325px;top:593px;" width="13" height="12" viewBox="0 0 13 12"><path d="M0 1.5H5M0 6H5M0 11H13" stroke="#AFB1B3" stroke-width="1.6"/><path d="M9.5 0V8M6.5 5L9.5 8.5L12.5 5" fill="none" stroke="#AFB1B3" stroke-width="1.6"/></svg>
<svg style="position:absolute;left:1325px;top:619px;" width="13" height="14" viewBox="0 0 13 14"><rect x="2.5" y="0" width="8" height="3" fill="#AFB1B3"/><rect x="0" y="4" width="13" height="6" fill="#AFB1B3"/><rect x="3" y="8" width="7" height="6" fill="#3C3F41" stroke="#AFB1B3" stroke-width="1.4"/></svg>
<svg style="position:absolute;left:1326px;top:645px;" width="11" height="13" viewBox="0 0 11 13"><rect x="0" y="2" width="11" height="1.6" fill="#AFB1B3"/><rect x="3.5" y="0" width="4" height="2" fill="#AFB1B3"/><path d="M1 4.5H10L9.3 13H1.7Z" fill="#AFB1B3"/></svg>
<div style="position:absolute;left:1316px;top:508px;width:1px;height:186px;background:#323232;"></div>
<div style="position:absolute;left:22px;top:694px;width:1323px;height:1px;background:#323232;"></div>
<div style="position:absolute;left:0px;top:694px;width:22px;height:1px;background:#323232;"></div>
<div style="position:absolute;left:1345px;top:694px;width:21px;height:1px;background:#323232;"></div>
<div style="position:absolute;left:72px;top:695px;width:56px;height:22px;background:#2F3133;"></div>
<svg style="position:absolute;left:33px;top:700px;" width="10" height="12" viewBox="0 0 10 12"><circle cx="2" cy="2" r="1.5" fill="#AFB1B3"/><circle cx="2" cy="10" r="1.5" fill="#AFB1B3"/><circle cx="8" cy="2" r="1.5" fill="#AFB1B3"/><path d="M2 2V10M8 2C8 6 2 5 2 9" fill="none" stroke="#AFB1B3" stroke-width="1.5"/></svg>
<div style="position:absolute;left:48.8px;top:702.27px;font-family:'Liberation Sans', sans-serif;font-size:11.5px;font-weight:400;line-height:1;white-space:pre;color:#BBBBBB;letter-spacing:-0.234px;">Git</div>
<svg style="position:absolute;left:83px;top:702px;" width="8" height="10" viewBox="0 0 8 10"><path d="M0 0L8 5L0 10Z" fill="#C8C8C8"/></svg>
<div style="position:absolute;left:98.3px;top:702.27px;font-family:'Liberation Sans', sans-serif;font-size:11.5px;font-weight:400;line-height:1;white-space:pre;color:#E6E6E6;letter-spacing:-0.270px;">Run</div>
<svg style="position:absolute;left:140px;top:702px;" width="10" height="9" viewBox="0 0 10 9"><path d="M0 1H2M0 4.5H2M0 8H2M3.5 1H10M3.5 4.5H10M3.5 8H10" stroke="#AFB1B3" stroke-width="1.6"/></svg>
<div style="position:absolute;left:155px;top:702.27px;font-family:'Liberation Sans', sans-serif;font-size:11.5px;font-weight:400;line-height:1;white-space:pre;color:#BBBBBB;letter-spacing:-0.554px;">TODO</div>
<svg style="position:absolute;left:207px;top:701px;" width="11" height="11" viewBox="0 0 11 11"><circle cx="5.5" cy="5.5" r="5.5" fill="#AFB1B3"/><path d="M5.5 2.5V6.5M5.5 8V9.3" stroke="#3C3F41" stroke-width="1.6"/></svg>
<div style="position:absolute;left:223.5px;top:702.27px;font-family:'Liberation Sans', sans-serif;font-size:11.5px;font-weight:400;line-height:1;white-space:pre;color:#BBBBBB;letter-spacing:-0.322px;">Problems</div>
<svg style="position:absolute;left:292px;top:701px;" width="11" height="10" viewBox="0 0 11 10"><rect x="0" y="0" width="11" height="10" fill="#C8C8C8"/><path d="M2 2L4.5 4.5L2 7M5 8H9" fill="none" stroke="#3C3F41" stroke-width="1"/></svg>
<div style="position:absolute;left:307.8px;top:702.27px;font-family:'Liberation Sans', sans-serif;font-size:11.5px;font-weight:400;line-height:1;white-space:pre;color:#BBBBBB;letter-spacing:-0.034px;">Terminal</div>
<svg style="position:absolute;left:371px;top:698px;" width="16" height="16" viewBox="0 0 16 16"><path d="M8 0.5L15 4V12L8 15.5L1 12V4Z" fill="#75B7E6"/><path d="M1 4L8 7.5L15 4M8 7.5V15.5" fill="none" stroke="#3C85C4" stroke-width="1"/><path d="M5 4.5A3 2 0 1 1 10 5" fill="none" stroke="#3C85C4"/></svg>
<div style="position:absolute;left:391px;top:702.27px;font-family:'Liberation Sans', sans-serif;font-size:11.5px;font-weight:400;line-height:1;white-space:pre;color:#BBBBBB;letter-spacing:0.022px;">Conan</div>
<svg style="position:absolute;left:448px;top:700px;" width="12" height="12" viewBox="0 0 12 12"><path d="M6 0L12 3L6 6L0 3Z" fill="#AFB1B3"/><path d="M0 6L6 9L12 6M0 9L6 12L12 9" fill="none" stroke="#AFB1B3" stroke-width="1.3"/></svg>
<div style="position:absolute;left:465.3px;top:702.27px;font-family:'Liberation Sans', sans-serif;font-size:11.5px;font-weight:400;line-height:1;white-space:pre;color:#BBBBBB;letter-spacing:-0.268px;">Python Packages</div>
<svg style="position:absolute;left:573px;top:700px;" width="12" height="12" viewBox="0 0 12 12"><path d="M6 0L12 11.5H0Z" fill="#AFB1B3"/><path d="M6 6L8 10H4Z" fill="#3C3F41"/></svg>
<div style="position:absolute;left:590.4px;top:702.27px;font-family:'Liberation Sans', sans-serif;font-size:11.5px;font-weight:400;line-height:1;white-space:pre;color:#BBBBBB;letter-spacing:-0.447px;">CMake</div>
<svg style="position:absolute;left:647px;top:701px;" width="11" height="10" viewBox="0 0 11 10"><path d="M0 1H10M0 5H7M0 9H10" stroke="#AFB1B3" stroke-width="1.6"/></svg>
<div style="position:absolute;left:663.6px;top:702.27px;font-family:'Liberation Sans', sans-serif;font-size:11.5px;font-weight:400;line-height:1;white-space:pre;color:#BBBBBB;letter-spacing:-0.403px;">Messages</div>
<svg style="position:absolute;left:1267px;top:700px;" width="14" height="14" viewBox="0 0 14 14"><circle cx="6.8" cy="6.6" r="6.4" fill="#499C54"/><path d="M7 8L13.3 13.3L12.5 7Z" fill="#499C54"/><text x="7" y="11" font-family="Liberation Sans" font-size="10" font-weight="700" fill="#FFFFFF" text-anchor="middle">1</text></svg>
<div style="position:absolute;left:1284.7px;top:702.27px;font-family:'Liberation Sans', sans-serif;font-size:11.5px;font-weight:400;line-height:1;white-space:pre;color:#BBBBBB;letter-spacing:-0.277px;">Event Log</div>
<div style="position:absolute;left:0px;top:717px;width:1366px;height:1px;background:#323232;"></div>
<svg style="position:absolute;left:6px;top:721px;" width="13" height="13" viewBox="0 0 13 13"><rect x="3.5" y="0.5" width="9" height="9" fill="none" stroke="#AFB1B3" stroke-width="1.1"/><path d="M0.5 3V12.5H10" fill="none" stroke="#AFB1B3" stroke-width="1.1"/></svg>
<div style="position:absolute;left:27.7px;top:723.27px;font-family:'Liberation Sans', sans-serif;font-size:11.5px;font-weight:400;line-height:1;white-space:pre;color:#BBBBBB;letter-spacing:0.025px;">Tests passed: 1 (a minute ago)</div>
<div style="position:absolute;left:1039.8px;top:723.27px;font-family:'Liberation Sans', sans-serif;font-size:11.5px;font-weight:400;line-height:1;white-space:pre;color:#BBBBBB;letter-spacing:-0.508px;">11:1</div>
<div style="position:absolute;left:1072.7px;top:723.27px;font-family:'Liberation Sans', sans-serif;font-size:11.5px;font-weight:400;line-height:1;white-space:pre;color:#BBBBBB;letter-spacing:-1.211px;">LF</div>
<div style="position:absolute;left:1096.5px;top:723.27px;font-family:'Liberation Sans', sans-serif;font-size:11.5px;font-weight:400;line-height:1;white-space:pre;color:#BBBBBB;letter-spacing:-0.119px;">UTF-8</div>
<div style="position:absolute;left:1140.3px;top:723.27px;font-family:'Liberation Sans', sans-serif;font-size:11.5px;font-weight:400;line-height:1;white-space:pre;color:#BBBBBB;letter-spacing:-0.291px;">2 spaces</div>
<svg style="position:absolute;left:1197px;top:721px;" width="11" height="13" viewBox="0 0 11 13"><circle cx="2" cy="2" r="1.6" fill="#AFB1B3"/><circle cx="2" cy="11" r="1.6" fill="#AFB1B3"/><circle cx="9" cy="2" r="1.6" fill="#AFB1B3"/><path d="M2 2V11M9 2C9 7 2 6 2 10" fill="none" stroke="#AFB1B3" stroke-width="1.6"/></svg>
<div style="position:absolute;left:1213.8px;top:723.27px;font-family:'Liberation Sans', sans-serif;font-size:11.5px;font-weight:400;line-height:1;white-space:pre;color:#BBBBBB;letter-spacing:0.041px;">master</div>
<svg style="position:absolute;left:1259px;top:722px;" width="12" height="12" viewBox="0 0 12 12"><path d="M4.5 5V3A2.5 2.5 0 0 1 9.5 3" fill="none" stroke="#AFB1B3" stroke-width="1.5"/><rect x="0" y="5" width="8" height="6.5" fill="#AFB1B3"/></svg>
<div style="position:absolute;left:1278px;top:718px;width:17px;height:20px;background:#56595B;"></div>
<div style="position:absolute;left:1278px;top:718px;width:12px;height:20px;background:#646668;"></div>
<div style="position:absolute;left:1283.4px;top:723.27px;font-family:'Liberation Sans', sans-serif;font-size:11.5px;font-weight:400;line-height:1;white-space:pre;color:#BBBBBB;letter-spacing:0.005px;">299 of 2000M</div>
</body></html>
